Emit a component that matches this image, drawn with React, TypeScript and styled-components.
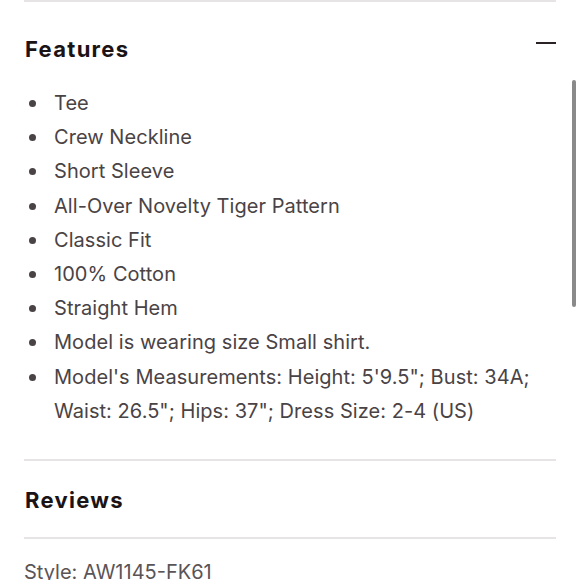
import React from 'react';
import styled, { createGlobalStyle } from 'styled-components';

const GlobalStyle = createGlobalStyle`
  html, body {
    margin: 0;
    padding: 0;
    background: #ffffff;
  }
  body {
    font-family: 'Inter', 'Noto Sans', sans-serif;
    -webkit-font-smoothing: antialiased;
  }
`;

const Page = styled.div`
  position: relative;
  width: 580px;
  height: 580px;
  overflow: hidden;
  background: #ffffff;
`;

const Content = styled.div`
  padding: 0 24px;
  width: 532px;
`;

const Divider = styled.div`
  height: 2px;
  background: #e6e4e4;
`;

const SectionHeader = styled.div<{ pad: string }>`
  display: flex;
  align-items: center;
  justify-content: space-between;
  padding: ${({ pad }) => pad};
`;

const Title = styled.h2`
  margin: 0;
  font-size: 22px;
  line-height: 28px;
  font-weight: 700;
  letter-spacing: 1.3px;
  color: #1b1314;
  padding-left: 1px;
`;

const Minus = styled.span`
  display: block;
  width: 20px;
  height: 2px;
  background: #2a2224;
  margin-bottom: 12px;
`;

const List = styled.ul`
  list-style: none;
  margin: 0;
  padding: 0 0 31px 0;
`;

const Item = styled.li`
  position: relative;
  padding-left: 30px;
  font-size: 20px;
  line-height: 34.2px;
  letter-spacing: 0.05px;
  color: #4a4345;

  &::before {
    content: '';
    position: absolute;
    left: 5px;
    top: 14px;
    width: 7px;
    height: 7px;
    border-radius: 50%;
    background: #4a4345;
  }
`;

const Meta = styled.div`
  padding-top: 21px;
  font-size: 20px;
  line-height: 24px;
  color: #5a5456;
`;

const Scrollbar = styled.div`
  position: absolute;
  left: 572px;
  top: 80px;
  width: 4px;
  height: 227px;
  border-radius: 2px;
  background: #8a8a8a;
`;

const features = [
  'Tee',
  'Crew Neckline',
  'Short Sleeve',
  'All-Over Novelty Tiger Pattern',
  'Classic Fit',
  '100% Cotton',
  'Straight Hem',
  'Model is wearing size Small shirt.',
  'Model\'s Measurements: Height: 5\'9.5"; Bust: 34A; Waist: 26.5"; Hips: 37"; Dress Size: 2-4 (US)',
];

export default function App() {
  return (
    <Page>
      <GlobalStyle />
      <Content>
        <Divider />
        <SectionHeader pad="33px 0 23px 0">
          <Title>Features</Title>
          <Minus />
        </SectionHeader>
        <List>
          {features.map((f) => (
            <Item key={f}>{f}</Item>
          ))}
        </List>
        <Divider />
        <SectionHeader pad="25px 0 23px 0">
          <Title>Reviews</Title>
        </SectionHeader>
        <Divider />
        <Meta>Style: AW1145-FK61</Meta>
      </Content>
      <Scrollbar />
    </Page>
  );
}
